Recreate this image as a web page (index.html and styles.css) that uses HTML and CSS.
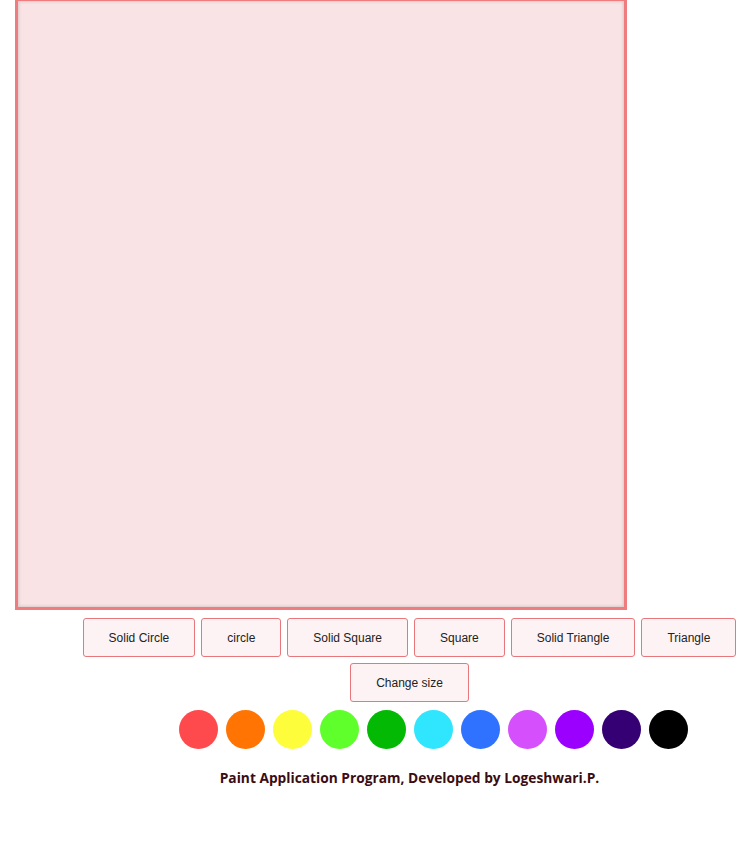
FILE: index.html
```html
<!DOCTYPE html>
<html>
<head>
<meta charset="utf-8">
<link rel="stylesheet" href="styles.css">
</head>
<body>
<div class="canvas-wrap"><div class="canvas"></div></div>
<div class="controls">
  <div class="btn-row">
    <button class="btn">Solid Circle</button>
    <button class="btn">circle</button>
    <button class="btn">Solid Square</button>
    <button class="btn">Square</button>
    <button class="btn">Solid Triangle</button>
    <button class="btn">Triangle</button>
  </div>
  <div class="btn-row">
    <button class="btn">Change size</button>
  </div>
  <div class="colors">
    <span class="dot c1"></span>
    <span class="dot c2"></span>
    <span class="dot c3"></span>
    <span class="dot c4"></span>
    <span class="dot c5"></span>
    <span class="dot c6"></span>
    <span class="dot c7"></span>
    <span class="dot c8"></span>
    <span class="dot c9"></span>
    <span class="dot c10"></span>
    <span class="dot c11"></span>
  </div>
  <p class="credit">Paint Application Program, Developed by Logeshwari.P.</p>
</div>
</body>
</html>
```
FILE: styles.css
```css
html, body { margin: 0; padding: 0; background: #ffffff; }
body { font-family: "Liberation Sans", Arial, sans-serif; }
.canvas-wrap { padding-left: 15px; }
.canvas {
  width: 606px;
  height: 606px;
  margin-top: -2px;
  border: 3px solid #ef7d7f;
  background: #f9e3e5;
  box-shadow: inset 0 0 3px 1px #d8c8c9;
}
.controls {
  width: 659px;
  margin-left: 80px;
  padding-top: 8px;
}
.btn-row {
  display: flex;
  justify-content: center;
  gap: 6px;
  margin-bottom: 6px;
}
.btn {
  height: 39px;
  padding: 0 25px;
  border: 1px solid #e8777b;
  border-radius: 3px;
  background: #fdf3f4;
  color: #222;
  font-family: "Liberation Sans", Arial, sans-serif;
  font-size: 12px;
}
.colors {
  display: flex;
  justify-content: center;
  gap: 8px;
  padding-left: 48px;
  margin-top: 8px;
}
.dot { width: 39px; height: 39px; border-radius: 50%; display: block; }
.c1 { background: #ff4a4d; }
.c2 { background: #ff7402; }
.c3 { background: #fdfd3b; }
.c4 { background: #5fff2c; }
.c5 { background: #04b904; }
.c6 { background: #30e5fe; }
.c7 { background: #2f72ff; }
.c8 { background: #d64ffc; }
.c9 { background: #9b00fe; }
.c10 { background: #340074; }
.c11 { background: #000000; }
.credit {
  margin: 19px 0 0;
  text-align: center;
  font-family: "Open Sans", "Noto Sans", sans-serif;
  font-weight: 700;
  font-size: 13.75px;
  color: #3a0c12;
}
```
